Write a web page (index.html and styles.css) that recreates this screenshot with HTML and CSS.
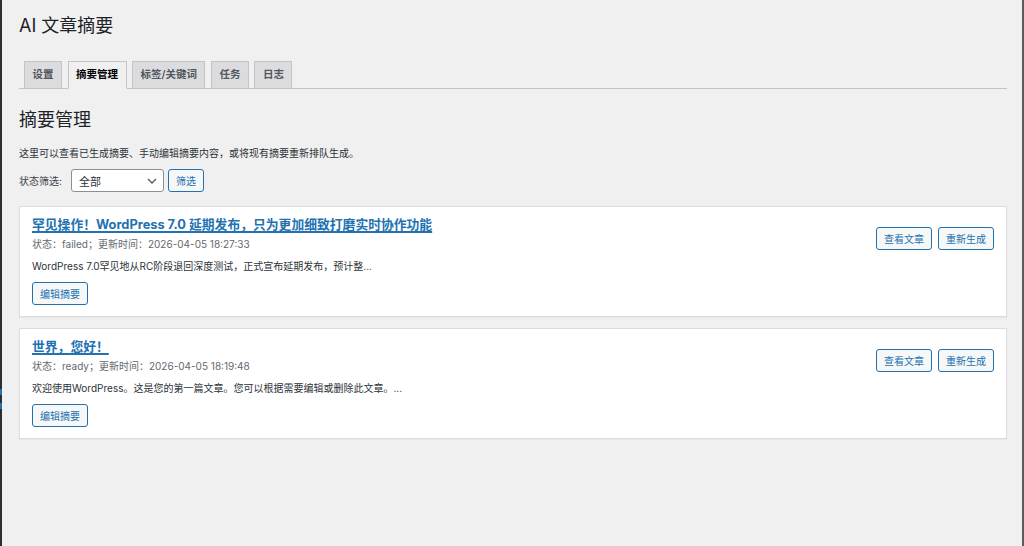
FILE: index.html
```html
<!DOCTYPE html>
<html lang="zh-CN">
<head>
<meta charset="utf-8">
<title>AI 文章摘要</title>
<link rel="stylesheet" href="styles.css">
</head>
<body>
<div class="frame">
  <div class="edge edge-left">
    <span class="edge-mark mark-a"></span>
    <span class="edge-mark mark-b"></span>
  </div>
  <main class="wrap">
    <h1 class="page-title">AI 文章摘要</h1>
    <nav class="tabs">
      <a class="tab">设置</a>
      <a class="tab tab-active">摘要管理</a>
      <a class="tab">标签/关键词</a>
      <a class="tab">任务</a>
      <a class="tab">日志</a>
    </nav>
    <h2 class="section-title">摘要管理</h2>
    <p class="desc">这里可以查看已生成摘要、手动编辑摘要内容，或将现有摘要重新排队生成。</p>
    <div class="filter">
      <span class="filter-label">状态筛选:</span>
      <div class="select">
        <span>全部</span>
        <svg class="chev" width="10" height="6" viewBox="0 0 10 6"><path d="M1 1l4 4 4-4" fill="none" stroke="#50575e" stroke-width="1.3"/></svg>
      </div>
      <button class="btn">筛选</button>
    </div>

    <section class="card">
      <div class="card-main">
        <a class="card-title">罕见操作！WordPress 7.0 延期发布，只为更加细致打磨实时协作功能</a>
        <div class="meta">状态：failed；更新时间：2026-04-05 18:27:33</div>
        <div class="excerpt">WordPress 7.0罕见地从RC阶段退回深度测试，正式宣布延期发布，预计整...</div>
        <button class="btn btn-edit">编辑摘要</button>
      </div>
      <div class="card-actions">
        <button class="btn">查看文章</button>
        <button class="btn">重新生成</button>
      </div>
    </section>

    <section class="card">
      <div class="card-main">
        <a class="card-title">世界，您好！</a>
        <div class="meta">状态：ready；更新时间：2026-04-05 18:19:48</div>
        <div class="excerpt">欢迎使用WordPress。这是您的第一篇文章。您可以根据需要编辑或删除此文章。...</div>
        <button class="btn btn-edit">编辑摘要</button>
      </div>
      <div class="card-actions">
        <button class="btn">查看文章</button>
        <button class="btn">重新生成</button>
      </div>
    </section>
  </main>
  <div class="edge edge-right"></div>
</div>
</body>
</html>
```
FILE: styles.css
```css
* { box-sizing: border-box; }
html, body { margin: 0; padding: 0; }
body {
  background: #f0f0f1;
  color: #1d2327;
  font-family: "Inter", "Noto Sans CJK SC", sans-serif;
  font-size: 10px;
}
.frame {
  display: flex;
  min-height: 546px;
}
.edge {
  width: 2px;
  flex: none;
  display: flex;
  flex-direction: column;
}
.edge-left { background: #2e2e2f; }
.edge-right { background: #5c5c5e; }
.edge-mark {
  display: block;
  height: 6px;
  background: #2271b1;
}
.mark-a { margin-top: 389px; }
.mark-b { margin-top: 8px; }
.wrap {
  flex: 1;
  padding: 0 15px 0 17px;
}
.page-title {
  margin: 14px 0 0;
  font-size: 18px;
  line-height: 23px;
  font-weight: 400;
  color: #1d2327;
}
.tabs {
  display: flex;
  margin-top: 24px;
  border-bottom: 1px solid #c3c4c7;
}
.tab {
  margin-left: 5.5px;
  margin-bottom: -1px;
  padding: 4px 7.5px 4px;
  line-height: 18px;
  font-size: 10.5px;
  font-weight: 600;
  color: #50575e;
  background: #dcdcde;
  border: 1px solid #c3c4c7;
}
.tab:first-child { margin-left: 5px; }
.tab-active {
  background: #f0f0f1;
  color: #000;
  border-bottom-color: #f0f0f1;
}
.section-title {
  margin: 19px 0 0;
  font-size: 18px;
  line-height: 23px;
  font-weight: 400;
}
.desc {
  margin: 15px 0 0;
  line-height: 14px;
  color: #2c3338;
}
.filter {
  display: flex;
  align-items: center;
  margin-top: 9px;
  height: 23px;
}
.filter-label { color: #3c434a; margin-right: 9px; }
.select {
  width: 93px;
  height: 23px;
  border: 1px solid #8c8f94;
  border-radius: 3px;
  background: #fff;
  display: flex;
  align-items: center;
  justify-content: space-between;
  padding: 0 6px 0 7px;
  font-size: 11px;
  color: #2c3338;
}
.chev { display: block; }
.btn {
  height: 23px;
  padding: 0 7px;
  font-family: inherit;
  font-size: 10px;
  color: #2271b1;
  background: #f6f7f7;
  border: 1px solid #2271b1;
  border-radius: 3px;
}
.filter .btn { margin-left: 4px; }
.card {
  display: flex;
  justify-content: space-between;
  align-items: flex-start;
  background: #fff;
  border: 1px solid #dcdcde;
  box-shadow: 0 1px 1px rgba(0,0,0,0.04);
  padding: 10px 12px 11px 12px;
  margin-top: 14px;
}
.card + .card { margin-top: 11px; }
.card-main {
  display: flex;
  flex-direction: column;
  align-items: flex-start;
}
.card-title {
  font-size: 12.8px;
  line-height: 15px;
  font-weight: 700;
  color: #2271b1;
  text-decoration: underline;
  text-decoration-thickness: 1.5px;
  text-underline-offset: 2px;
}
.meta {
  margin-top: 5px;
  line-height: 14px;
  color: #646970;
}
.excerpt {
  margin-top: 8px;
  line-height: 14px;
  color: #2c3338;
}
.btn-edit { margin-top: 9px; }
.card-actions {
  display: flex;
  gap: 6px;
  margin-top: 10px;
}
```
